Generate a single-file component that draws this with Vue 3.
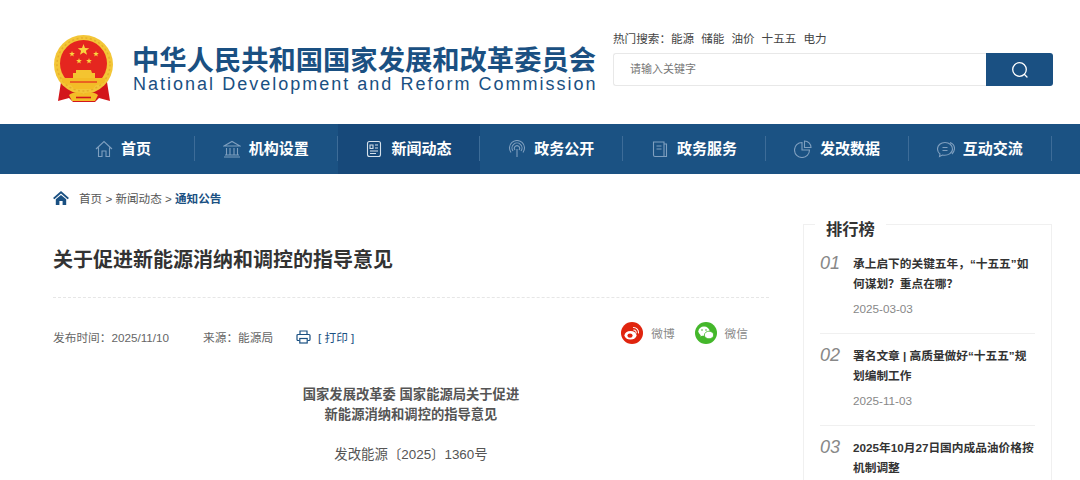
<template>
  <div class="page">
    <header class="top wrap">
      <div class="brand">
        <svg class="emblem" width="62" height="68" viewBox="0 0 62 68">
          <path d="M8 47 L5 66 L16 63 L20 67 L42 67 L46 63 L57 66 L54 47 Z" fill="#d3161b" />
          <circle cx="30.500" cy="29.500" r="29.500" fill="#f3c637" />
          <circle cx="30.500" cy="29.500" r="26.500" fill="none" stroke="#e6ae2c" stroke-width="1.500" stroke-dasharray="2 2.500" />
          <circle cx="30.500" cy="28.500" r="23.500" fill="#e5261f" />
          <polygon v-for="s in stars" :key="s.x" :points="starPoints(s)" fill="#f9d53f" />
          <path d="M23 35 h15 l1 3 h3 v6 h-22 v-6 h3 Z" fill="#f4c430" />
          <path d="M9 43 h43 c1 4 -3 7 -9 7 l-3 4 h-19 l-3 -4 c-6 0 -10 -3 -9 -7 Z" fill="#f3bc27" />
          <path d="M17 47 h27" stroke="#e5261f" stroke-width="1.200" />
          <path d="M16 60 c5 -4 10 -3 14.500 -1 c4.500 -2 9.500 -3 14.500 1 l-3 6 h-23 Z" fill="#f3bc27" />
          <path d="M23 62.500 h15" stroke="#d3161b" stroke-width="1.600" />
        </svg>
        <div class="brand-text">
          <div class="brand-cn">中华人民共和国国家发展和改革委员会</div>
          <div class="brand-en">National Development and Reform Commission</div>
        </div>
      </div>
      <div class="search-area">
        <div class="hot">
          <span>热门搜索：</span>
          <a v-for="w in hotWords" :key="w">{{ w }}</a>
        </div>
        <div class="search">
          <div class="search-input">请输入关键字</div>
          <button class="search-btn">
            <svg width="18" height="18" viewBox="0 0 18 18" fill="none" stroke="#fff" stroke-width="1.300">
              <circle cx="8.500" cy="8.500" r="6.800" />
              <path d="M13.500 13.500 L16 16" stroke-linecap="round" />
            </svg>
          </button>
        </div>
      </div>
    </header>

    <nav class="nav">
      <div class="wrap nav-row">
        <div
          v-for="item in navItems"
          :key="item.label"
          class="nav-item"
          :class="{ active: item.active }"
        >
          <svg class="nav-icon" width="18" height="18" viewBox="0 0 18 18" fill="none" stroke-width="1.100" v-html="item.icon"></svg>
          <span>{{ item.label }}</span>
        </div>
      </div>
    </nav>

    <div class="wrap crumbs">
      <svg width="16" height="14" viewBox="0 0 16 14" fill="#1a5082">
        <path d="M8 0 L16 7 L14.600 8.200 L8 2.600 L1.400 8.200 L0 7 Z" />
        <path d="M2.800 8.300 L8 3.900 L13.200 8.300 V14 H9.600 V10 H6.400 V14 H2.800 Z" />
      </svg>
      <span class="crumb-links">首页 &gt; 新闻动态 &gt; <b>通知公告</b></span>
    </div>

    <div class="wrap content">
      <main class="article">
        <h1>关于促进新能源消纳和调控的指导意见</h1>
        <div class="meta">
          <span class="date">发布时间：2025/11/10</span>
          <span class="source">来源：能源局</span>
          <span class="print">
            <svg class="print-icon" width="15" height="14" viewBox="0 0 15 14" fill="none" stroke="#1a5082" stroke-width="1.200">
              <path d="M4 4 V1 H11 V4" />
              <path d="M3.500 10.500 H2 a1 1 0 0 1 -1 -1 V5.500 a1 1 0 0 1 1 -1 H13 a1 1 0 0 1 1 1 V9.500 a1 1 0 0 1 -1 1 H11.500" />
              <rect x="3.800" y="8.500" width="7.400" height="4.500" />
            </svg>
            <a>[ 打印 ]</a>
          </span>
          <div class="share">
            <span class="share-item">
              <span class="round weibo">
                <svg width="16" height="14" viewBox="0 0 16 14">
                  <ellipse cx="6.500" cy="9.200" rx="6" ry="4.300" fill="#fff" />
                  <ellipse cx="6" cy="9.600" rx="2.600" ry="2.200" fill="#e0240e" />
                  <path d="M9.500 1.500 a5 5 0 0 1 5 5.500 M9.800 4 a2.600 2.600 0 0 1 2.400 3" fill="none" stroke="#fff" stroke-width="1.100" stroke-linecap="round" />
                </svg>
              </span>
              微博
            </span>
            <span class="share-item">
              <span class="round wechat">
                <svg width="16" height="14" viewBox="0 0 16 14" fill="#fff">
                  <ellipse cx="6" cy="5.200" rx="5.600" ry="4.600" />
                  <path d="M3 8 L2.400 10.600 L5.400 9 Z" />
                  <ellipse cx="11" cy="9" rx="4.600" ry="3.800" stroke="#44b72b" stroke-width="0.800" />
                  <circle cx="4" cy="4" r=".8" fill="#44b72b" />
                  <circle cx="8" cy="4" r=".8" fill="#44b72b" />
                </svg>
              </span>
              微信
            </span>
          </div>
        </div>
        <div class="body">
          <p class="doc-title">国家发展改革委 国家能源局关于促进<br />新能源消纳和调控的指导意见</p>
          <p class="doc-no">发改能源〔2025〕1360号</p>
        </div>
      </main>

      <aside class="rank">
        <h2>排行榜</h2>
        <div v-for="(r, i) in ranks" :key="r.title" class="rank-item">
          <span class="rank-no">0{{ i + 1 }}</span>
          <div class="rank-main">
            <div class="rank-title">{{ r.title }}</div>
            <div v-if="r.date" class="rank-date">{{ r.date }}</div>
          </div>
        </div>
      </aside>
    </div>
  </div>
</template>

<script setup>
const hotWords = ['能源', '储能', '油价', '十五五', '电力']

const stars = [
  { x: 30.5, y: 15, r: 6 },
  { x: 19, y: 19, r: 3 },
  { x: 43, y: 19, r: 3 },
  { x: 26, y: 26, r: 3 },
  { x: 36, y: 26, r: 3 }
]

function starPoints({ x, y, r }) {
  const pts = []
  for (let i = 0; i < 10; i++) {
    const rad = i % 2 ? r * 0.42 : r
    const a = -Math.PI / 2 + (i * Math.PI) / 5
    pts.push(`${(x + rad * Math.cos(a)).toFixed(2)},${(y + rad * Math.sin(a)).toFixed(2)}`)
  }
  return pts.join(' ')
}

const c = 'stroke="#7f9fbf"'
const navItems = [
  {
    label: '首页',
    icon: `<path ${c} d="M1 9 L9 1.5 L17 9 M3.5 7.5 V16.5 H7 V11 H11 V16.5 H14.5 V7.5" />`
  },
  {
    label: '机构设置',
    icon: `<path ${c} d="M1 6 L9 1.5 L17 6 H1 Z M3.5 8 V14.5 M7 8 V14.5 M11 8 V14.5 M14.5 8 V14.5 M2 15 H16 M1 17 H17" />`
  },
  {
    label: '新闻动态',
    active: true,
    icon: `<rect stroke="#d5e0ea" x="2.5" y="1.5" width="13" height="15" rx="2" /><path stroke="#d5e0ea" d="M5 5 H8 V8.5 H5 Z M10 5 H13 M10 8 H13 M5 11 H13 M5 13.5 H11" />`
  },
  {
    label: '政务公开',
    icon: `<path ${c} d="M9 17 V9 M3 12.5 a7.5 7.5 0 1 1 12 0 M5 11 a5 5 0 1 1 8 0 M7 10 a2.6 2.6 0 1 1 4 0" />`
  },
  {
    label: '政务服务',
    icon: `<path ${c} d="M2.5 2 H13 V16.5 H4 a1.5 1.5 0 0 1 -1.5 -1.5 Z M13 4 H15.5 V16.5 H13 M5.5 6 H10.5 M5.5 9 H10.5" />`
  },
  {
    label: '发改数据',
    icon: `<path ${c} d="M8 2.5 a7.5 7.5 0 1 0 7.5 7.5 H8 Z M10.5 1 V7.5 H17 a6.5 6.5 0 0 0 -6.5 -6.5 Z" />`
  },
  {
    label: '互动交流',
    icon: `<path ${c} d="M8 2.500 c-4 0 -7.500 2.500 -7.500 6.500 c0 2.200 1 3.800 2.500 5 l-.5 2.500 l3 -1.500 c5.500 1 10 -2 10 -6 c0 -4 -3.500 -6.500 -7.500 -6.500 Z M13 2.500 c2.800 1 4.500 3.500 4.500 6 c0 2 -1 4 -2.500 5.500 M5.500 7.500 H10.500 M5.500 10.500 H10.500" />`
  }
]

const ranks = [
  { title: '承上启下的关键五年，“十五五”如何谋划？重点在哪？', date: '2025-03-03' },
  { title: '署名文章 | 高质量做好“十五五”规划编制工作', date: '2025-11-03' },
  { title: '2025年10月27日国内成品油价格按机制调整' }
]
</script>

<style>
html,
body {
  margin: 0;
  overflow: hidden;
  background: #fff;
}
</style>

<style scoped>
.page {
  font-family: "Liberation Sans", "Noto Sans CJK SC", sans-serif;
  color: #333;
  height: 480px;
  overflow: hidden;
}

.wrap {
  width: 1000px;
  margin-left: 53px;
}

.top {
  height: 124px;
  display: flex;
  justify-content: space-between;
}

.brand {
  display: flex;
  align-items: flex-start;
  padding-top: 35px;
}

.emblem {
  display: block;
}

.brand-text {
  margin-left: 17px;
  padding-top: 12px;
  color: #1a5082;
}

.brand-cn {
  font-size: 27.3px;
  font-weight: 700;
  line-height: 28px;
  white-space: nowrap;
}

.brand-en {
  margin-left: 1px;
  font-size: 18px;
  line-height: 18px;
  letter-spacing: 2.01px;
  white-space: nowrap;
}

.search-area {
  width: 440px;
  padding-top: 31px;
}

.hot {
  font-size: 11.6px;
  line-height: 16px;
  color: #444;
  display: flex;
  margin-bottom: 6px;
}

.hot a {
  margin-right: 7px;
}

.search {
  display: flex;
  height: 33px;
}

.search-input {
  flex: 1;
  box-sizing: border-box;
  border: 1px solid #e8e8e8;
  border-right: none;
  border-radius: 3px 0 0 3px;
  padding-left: 16px;
  font-size: 11px;
  line-height: 31px;
  color: #777;
}

.search-btn {
  width: 67px;
  border: none;
  border-radius: 0 3px 3px 0;
  background: #1a5082;
  display: flex;
  align-items: center;
  justify-content: center;
  padding: 0;
}

.nav {
  height: 50px;
  background: #1b5283;
}

.nav-row {
  display: flex;
  height: 50px;
  align-items: stretch;
  margin-left: 52px;
}

.nav-item {
  width: 142.8px;
  box-sizing: border-box;
  padding-bottom: 4px;
  display: flex;
  align-items: center;
  justify-content: center;
  gap: 8px;
  color: #fff;
  font-size: 15px;
  font-weight: 700;
  position: relative;
}

.nav-icon {
  margin: 3px 0 0 -1px;
}

.nav-item::after {
  content: "";
  position: absolute;
  right: 0;
  top: 12px;
  height: 25px;
  width: 1px;
  background: #3d6c98;
}

.nav-item.active {
  background: #17497a;
}

.crumbs {
  height: 48px;
  padding-bottom: 2px;
  display: flex;
  align-items: center;
  gap: 10px;
  font-size: 11.6px;
  color: #555;
}

.crumb-links b {
  color: #1a5082;
}

.content {
  display: flex;
  justify-content: space-between;
  width: 999px;
}

.article {
  width: 716px;
}

h1 {
  margin: 0;
  padding: 21px 0 22px;
  height: 30px;
  line-height: 30px;
  font-size: 20px;
  font-weight: 700;
  color: #333;
  border-bottom: 1px dashed #e6e6e6;
  box-sizing: content-box;
}

.meta {
  display: flex;
  align-items: center;
  font-size: 11.7px;
  color: #666;
  height: 76px;
}

.date {
  width: 150px;
}

.source {
  width: 93px;
}

.print {
  display: flex;
  align-items: center;
  gap: 7px;
  color: #1a5082;
}

.print-icon {
  margin-top: 2px;
}

.share {
  margin-left: auto;
  margin-right: 21px;
  margin-bottom: 7px;
  display: flex;
  gap: 20px;
  color: #888;
}

.share-item {
  display: flex;
  align-items: center;
  gap: 8px;
}

.round {
  width: 22px;
  height: 22px;
  border-radius: 50%;
  display: flex;
  align-items: center;
  justify-content: center;
}

.weibo {
  background: #e0240e;
}

.wechat {
  background: #44b72b;
}

.body {
  text-align: center;
  color: #555;
  padding-top: 11px;
}

.body p {
  margin: 0;
}

.doc-title {
  font-size: 13.3px;
  font-weight: 700;
  line-height: 20px;
}

.doc-no {
  font-size: 13.4px;
  line-height: 20px;
  margin-top: 20px !important;
}

.rank {
  width: 249px;
  box-sizing: border-box;
  border: 1px solid #f0f0f0;
  height: 400px;
  padding: 0 16px;
}

.rank h2 {
  margin: -11px 0 0 -5px;
  padding: 0 11px;
  width: 49px;
  background: #fff;
  font-size: 16.3px;
  font-weight: 700;
  line-height: 30px;
  color: #333;
}

.rank-item {
  display: flex;
  height: 92px;
  box-sizing: border-box;
  padding-top: 12px;
  border-bottom: 1px solid #f0f0f0;
}

.rank-item:first-of-type {
  height: 90px;
  padding-top: 10px;
}

.rank-no {
  width: 33px;
  flex: none;
  margin-top: -1px;
  font-size: 18px;
  font-style: italic;
  line-height: 20px;
  color: #888;
}

.rank-title {
  font-size: 11.7px;
  font-weight: 700;
  line-height: 20px;
  color: #333;
}

.rank-date {
  margin-top: 5px;
  font-size: 11.7px;
  line-height: 20px;
  color: #888;
}
</style>
